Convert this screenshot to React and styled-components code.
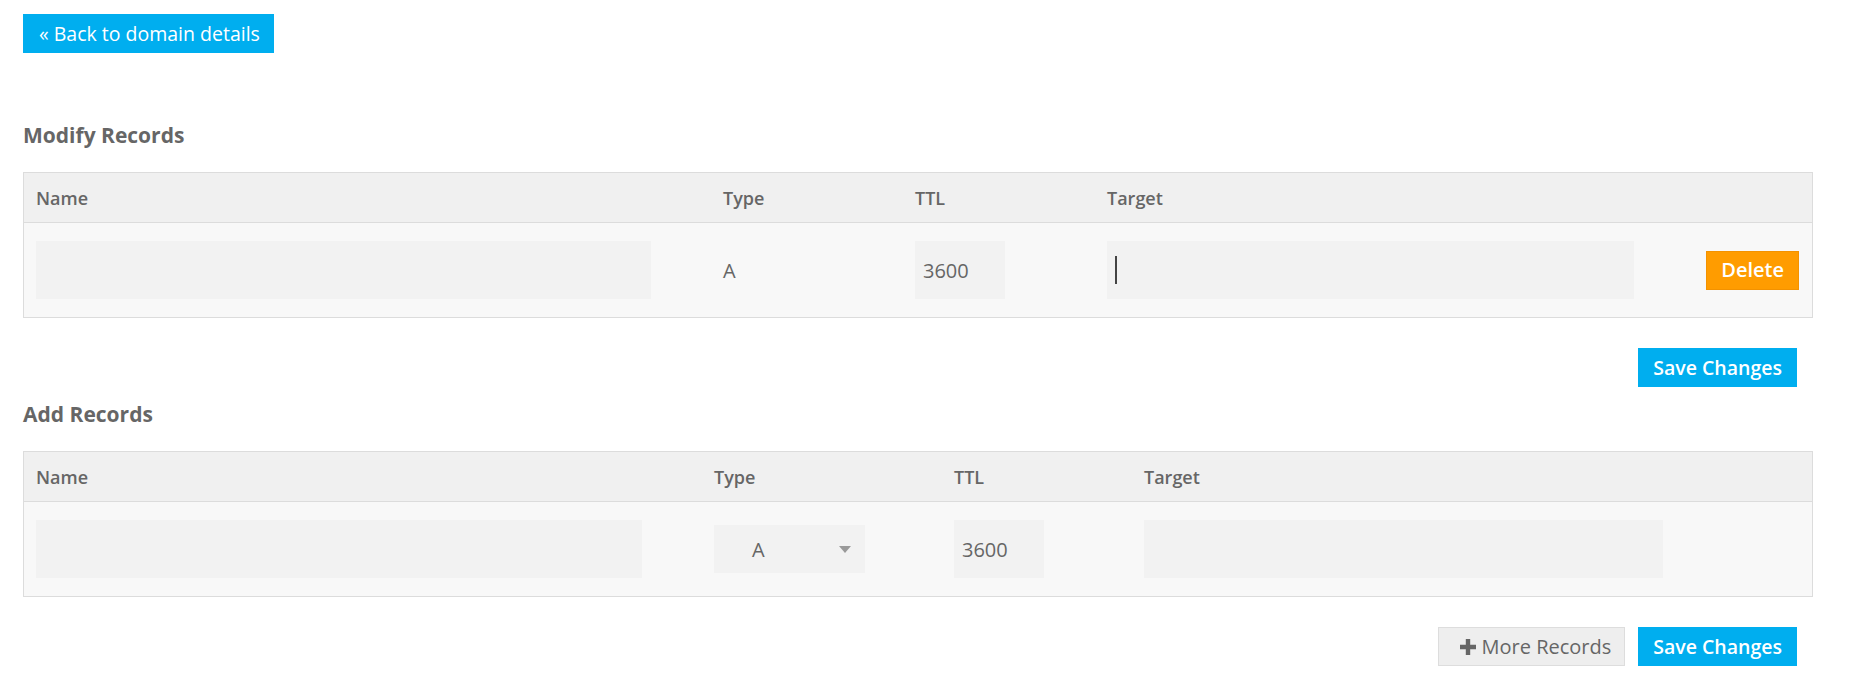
import React from "react";
import styled, { createGlobalStyle } from "styled-components";

const GlobalStyle = createGlobalStyle`
  html, body { margin: 0; padding: 0; background: #ffffff; }
  body { font-family: "Open Sans", "Liberation Sans", sans-serif; color: #666666; }
  * { box-sizing: border-box; }
`;

const Page = styled.div`
  width: 1813px;
  padding: 14px 0 0 23px;
`;

const Button = styled.button`
  display: inline-flex;
  align-items: center;
  justify-content: center;
  height: 39px;
  padding: 0 ${(p) => p.$pr || 14}px 0 ${(p) => p.$pl || 14}px;
  border: 1px solid ${(p) => p.$border};
  background: ${(p) => p.$bg};
  color: ${(p) => p.$color || "#ffffff"};
  font-family: "Open Sans", "Liberation Sans", sans-serif;
  font-size: ${(p) => p.$size || 20}px;
  font-weight: ${(p) => p.$weight || 400};
  line-height: 1;
  border-radius: 0;
  cursor: pointer;
  white-space: nowrap;
`;

const Title = styled.h2`
  margin: ${(p) => p.$top}px 0 23px 0;
  font-size: 21px;
  line-height: 28px;
  font-weight: 700;
  color: #666666;
`;

const Table = styled.div`
  border: 1px solid #dcdcdc;
  background: #f8f8f8;
`;

const GridRow = styled.div`
  display: grid;
  grid-template-columns: ${(p) => p.$cols};
  align-items: center;
`;

const HeadRow = styled(GridRow)`
  height: 50px;
  background: #f0f0f0;
  border-bottom: 1px solid #dcdcdc;
`;

const BodyRow = styled(GridRow)`
  height: 94px;
`;

const HeadCell = styled.div`
  padding: 0 12px;
  font-size: 18px;
  font-weight: 600;
  color: #666666;
`;

const Cell = styled.div`
  padding: 0 12px;
  display: flex;
  align-items: center;
  justify-content: ${(p) => (p.$end ? "flex-end" : "flex-start")};
  font-size: 20px;
  color: #666666;
`;

const Field = styled.div`
  width: ${(p) => p.$w}px;
  height: 58px;
  background: #f2f2f2;
  padding-left: 8px;
  display: flex;
  align-items: center;
  font-size: 20px;
  color: #666666;
`;

const Caret = styled.span`
  width: 2px;
  height: 28px;
  background: #444444;
`;

const Select = styled.div`
  width: 151px;
  height: 48px;
  background: #f2f2f2;
  display: flex;
  align-items: center;
  justify-content: space-between;
  padding: 0 14px 0 38px;
  font-size: 20px;
  color: #666666;
`;

const Arrow = styled.span`
  width: 0;
  height: 0;
  border-left: 6px solid transparent;
  border-right: 6px solid transparent;
  border-top: 7px solid #9a9a9a;
`;

const Actions = styled.div`
  display: flex;
  justify-content: flex-end;
  gap: 13px;
  margin-top: 30px;
  padding-right: 16px;
`;

const PlusIcon = () => (
  <svg width="16" height="16" viewBox="0 0 16 16" style={{ marginRight: 6 }}>
    <path d="M5.8 0h4.4v5.8H16v4.4h-5.8V16H5.8v-5.8H0V5.8h5.8z" fill="#666666" />
  </svg>
);

const BLUE = "#00aeef";
const ORANGE = "#ff9c00";

const modifyCols = "687px 192px 192px 601px 115px";
const addCols = "678px 240px 190px 679px";

export default function App() {
  return (
    <>
      <GlobalStyle />
      <Page>
        <Button $bg={BLUE} $border={BLUE} $pl={15} $pr={13} $size={19.5}>
          « Back to domain details
        </Button>

        <Title $top={68}>Modify Records</Title>
        <Table>
          <HeadRow $cols={modifyCols}>
            <HeadCell>Name</HeadCell>
            <HeadCell>Type</HeadCell>
            <HeadCell>TTL</HeadCell>
            <HeadCell>Target</HeadCell>
            <HeadCell />
          </HeadRow>
          <BodyRow $cols={modifyCols}>
            <Cell>
              <Field $w={615} />
            </Cell>
            <Cell>A</Cell>
            <Cell>
              <Field $w={90}>3600</Field>
            </Cell>
            <Cell>
              <Field $w={527}>
                <Caret />
              </Field>
            </Cell>
            <Cell $end>
              <Button $bg={ORANGE} $border="#f39200" $weight={600}>
                Delete
              </Button>
            </Cell>
          </BodyRow>
        </Table>
        <Actions>
          <Button $bg={BLUE} $border={BLUE} $weight={600} $size={19.5}>
            Save Changes
          </Button>
        </Actions>

        <Title $top={13}>Add Records</Title>
        <Table>
          <HeadRow $cols={addCols}>
            <HeadCell>Name</HeadCell>
            <HeadCell>Type</HeadCell>
            <HeadCell>TTL</HeadCell>
            <HeadCell>Target</HeadCell>
          </HeadRow>
          <BodyRow $cols={addCols}>
            <Cell>
              <Field $w={606} />
            </Cell>
            <Cell>
              <Select>
                <span>A</span>
                <Arrow />
              </Select>
            </Cell>
            <Cell>
              <Field $w={90}>3600</Field>
            </Cell>
            <Cell>
              <Field $w={519} />
            </Cell>
          </BodyRow>
        </Table>
        <Actions>
          <Button $bg="#eeeeee" $border="#dddddd" $color="#666666" $pl={21} $pr={13}>
            <PlusIcon />
            More Records
          </Button>
          <Button $bg={BLUE} $border={BLUE} $weight={600} $size={19.5}>
            Save Changes
          </Button>
        </Actions>
      </Page>
    </>
  );
}
